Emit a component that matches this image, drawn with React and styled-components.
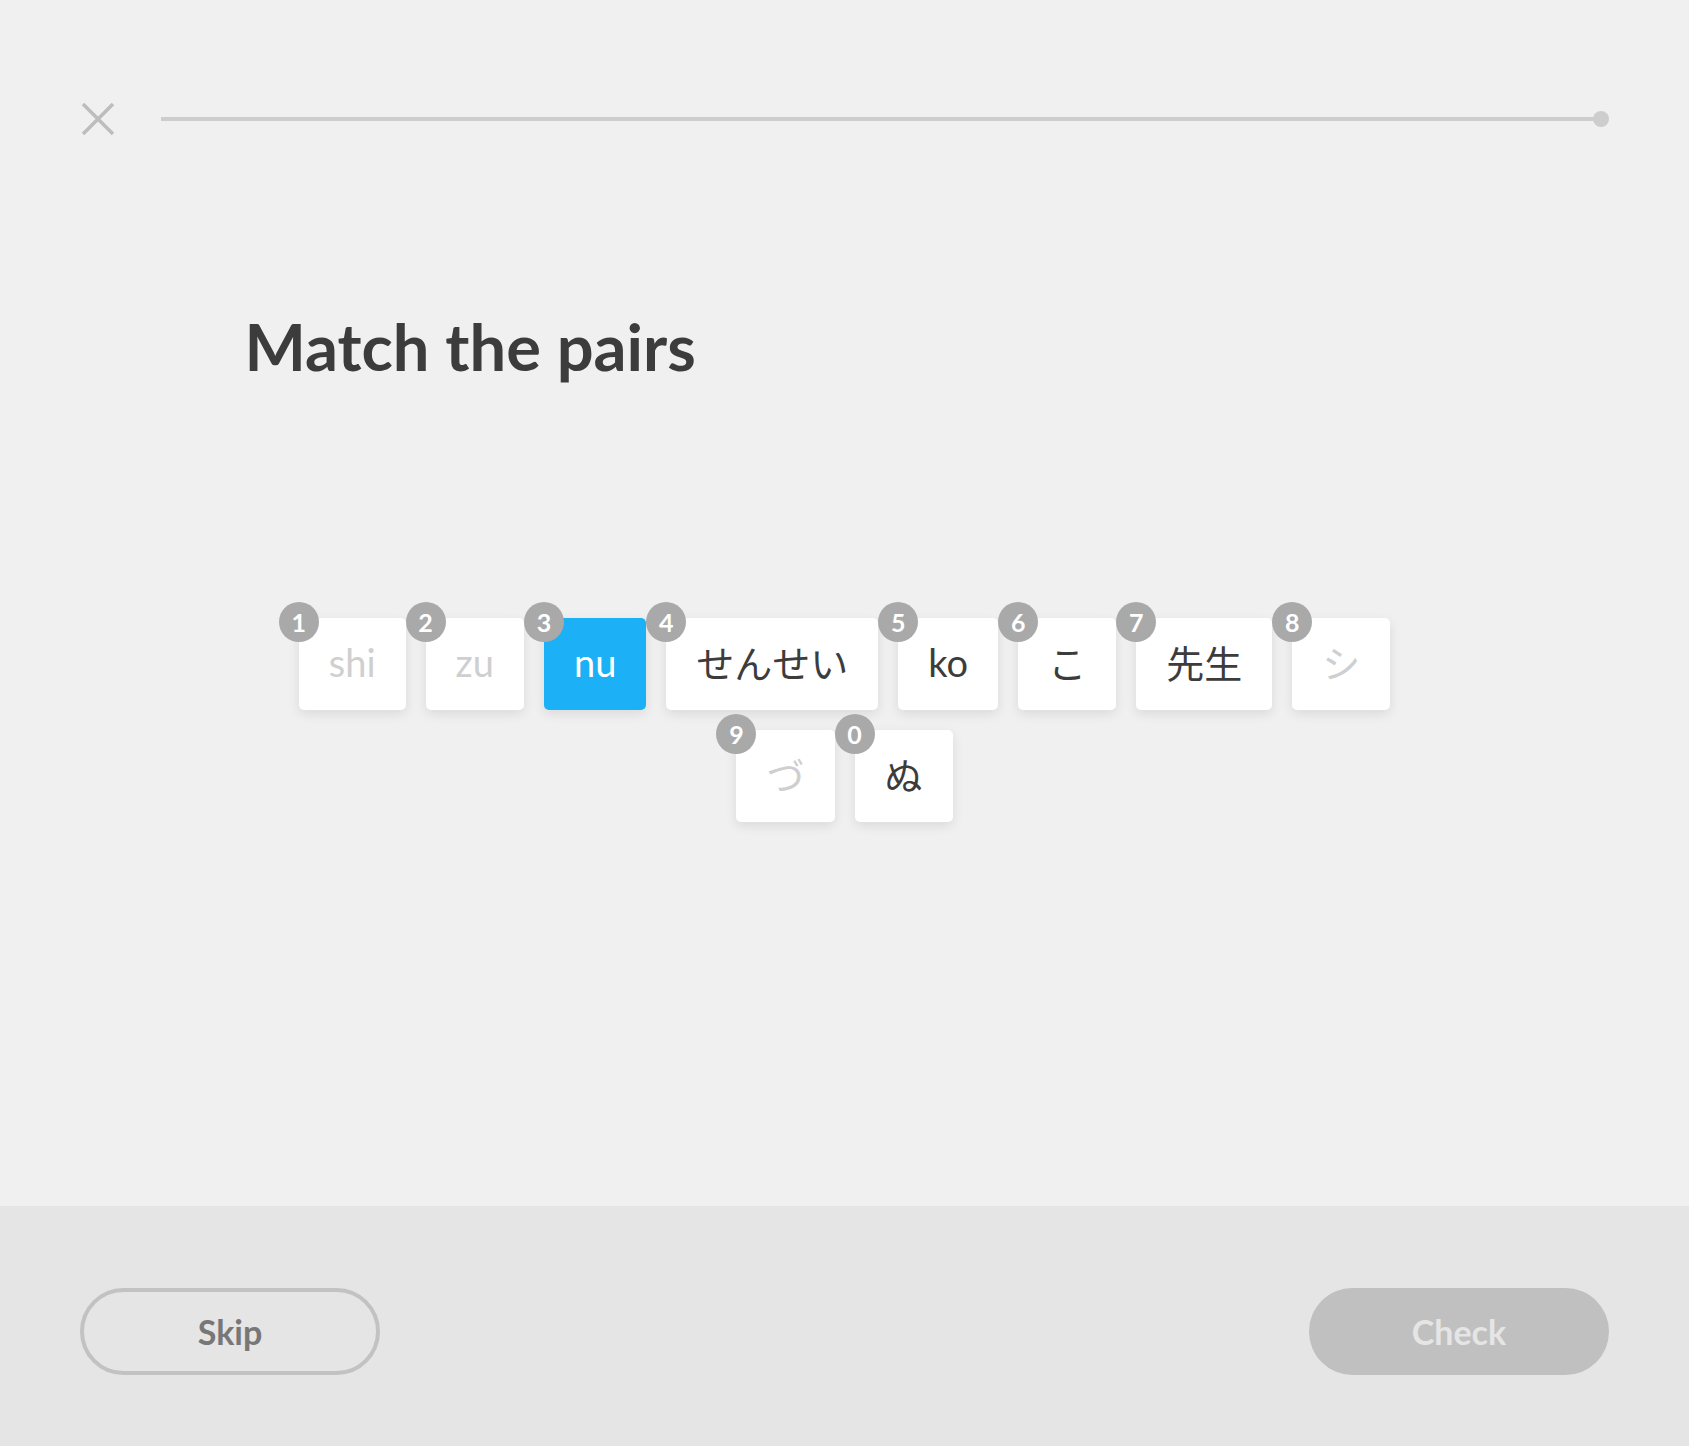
import React from "react";
import styled, { createGlobalStyle } from "styled-components";

const GlobalStyle = createGlobalStyle`
  html, body {
    margin: 0;
    padding: 0;
    background: #f0f0f0;
  }
  body {
    font-family: "Lato", "Noto Sans CJK JP", sans-serif;
  }
`;

const tiles = [
  { key: "1", label: "shi", faded: true },
  { key: "2", label: "zu", faded: true },
  { key: "3", label: "nu", selected: true },
  { key: "4", label: "せんせい" },
  { key: "5", label: "ko" },
  { key: "6", label: "こ" },
  { key: "7", label: "先生" },
  { key: "8", label: "シ", faded: true },
  { key: "9", label: "づ", faded: true },
  { key: "0", label: "ぬ" },
];

const App = () => {
  return (
    <Page>
      <GlobalStyle />
      <Header>
        <Close aria-label="close">
          <svg width="34" height="34" viewBox="0 0 34 34">
            <path
              d="M2 2 L32 32 M32 2 L2 32"
              stroke="#bdbdbd"
              strokeWidth="3.5"
              fill="none"
            />
          </svg>
        </Close>
        <Track>
          <Line />
          <Dot />
        </Track>
      </Header>

      <Main>
        <Title>Match the pairs</Title>
        <Tiles>
          {tiles.map((t) => (
            <Tile key={t.key} $selected={t.selected} $faded={t.faded}>
              <Badge>{t.key}</Badge>
              {t.label}
            </Tile>
          ))}
        </Tiles>
      </Main>

      <Footer>
        <SkipButton>Skip</SkipButton>
        <CheckButton disabled>Check</CheckButton>
      </Footer>
    </Page>
  );
};

export default App;

const Page = styled.div`
  min-height: 100vh;
  display: flex;
  flex-direction: column;
  background: #f0f0f0;
`;

const Header = styled.div`
  display: flex;
  align-items: center;
  gap: 46px;
  padding: 102px 80px 0 81px;
`;

const Close = styled.div`
  width: 34px;
  height: 34px;
  display: flex;
`;

const Track = styled.div`
  flex: 1;
  display: flex;
  align-items: center;
`;

const Line = styled.div`
  flex: 1;
  height: 4px;
  background: #cdcdcd;
`;

const Dot = styled.div`
  width: 16px;
  height: 16px;
  margin-left: -8px;
  border-radius: 50%;
  background: #cdcdcd;
`;

const Main = styled.div`
  flex: 1;
  width: 1200px;
  margin: 0 auto;
  padding-top: 171px;
`;

const Title = styled.h1`
  margin: 0;
  font-family: "Lato", sans-serif;
  font-weight: 700;
  font-size: 65px;
  line-height: 78px;
  color: #3c3c3c;
`;

const Tiles = styled.div`
  max-width: 1150px;
  margin: 233px auto 0;
  display: flex;
  flex-wrap: wrap;
  justify-content: center;
  gap: 20px;
`;

const Tile = styled.div`
  position: relative;
  height: 92px;
  padding: 0 30px 5px;
  box-sizing: border-box;
  display: flex;
  align-items: center;
  justify-content: center;
  border-radius: 5px;
  background: ${(p) => (p.$selected ? "#1cb0f6" : "#ffffff")};
  color: ${(p) =>
    p.$selected ? "#ffffff" : p.$faded ? "#cfcfcf" : "#3c3c3c"};
  font-family: "Lato", "Noto Sans CJK JP", sans-serif;
  font-size: 38px;
  font-weight: 400;
  box-shadow: 0 4px 12px rgba(0, 0, 0, 0.09);
`;

const Badge = styled.span`
  position: absolute;
  left: -20px;
  top: -16px;
  width: 40px;
  height: 40px;
  border-radius: 50%;
  background: #a9a9a9;
  color: #ffffff;
  font-family: "Lato", sans-serif;
  font-weight: 700;
  font-size: 25px;
  line-height: 40px;
  text-align: center;
`;

const Footer = styled.div`
  height: 240px;
  box-sizing: border-box;
  padding: 82px 80px 0;
  background: #e5e5e5;
  display: flex;
  justify-content: space-between;
  align-items: flex-start;
`;

const PillButton = styled.button`
  width: 300px;
  height: 87px;
  border-radius: 44px;
  font-family: "Lato", sans-serif;
  font-weight: 700;
  font-size: 34px;
  box-sizing: border-box;
  cursor: pointer;
`;

const SkipButton = styled(PillButton)`
  background: transparent;
  border: 4px solid #c2c2c2;
  color: #777777;
`;

const CheckButton = styled(PillButton)`
  background: #c0c0c0;
  border: none;
  color: #e5e5e5;
  cursor: default;
`;
